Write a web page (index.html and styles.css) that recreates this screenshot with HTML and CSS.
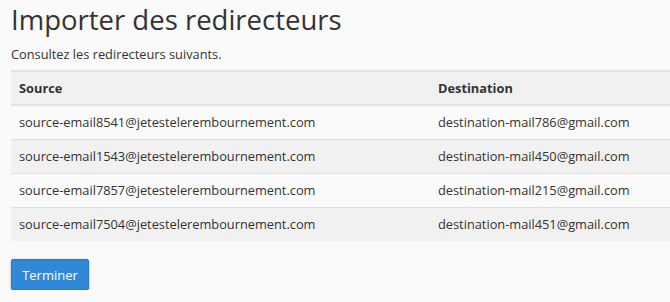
FILE: index.html
```html
<!DOCTYPE html>
<html lang="fr">
<head>
<meta charset="utf-8">
<title>Importer des redirecteurs</title>
<link rel="stylesheet" href="styles.css">
</head>
<body>
<main class="page">
  <h1 class="title">Importer des redirecteurs</h1>
  <p class="intro">Consultez les redirecteurs suivants.</p>
  <table class="list">
    <thead>
      <tr><th class="col-src">Source</th><th>Destination</th></tr>
    </thead>
    <tbody>
      <tr><td>source-email8541@jetestelerembournement.com</td><td>destination-mail786@gmail.com</td></tr>
      <tr><td>source-email1543@jetestelerembournement.com</td><td>destination-mail450@gmail.com</td></tr>
      <tr><td>source-email7857@jetestelerembournement.com</td><td>destination-mail215@gmail.com</td></tr>
      <tr><td>source-email7504@jetestelerembournement.com</td><td>destination-mail451@gmail.com</td></tr>
    </tbody>
  </table>
  <div class="actions">
    <button class="btn" type="button">Terminer</button>
  </div>
</main>
</body>
</html>
```

FILE: styles.css
```css
html, body {
  margin: 0;
  padding: 0;
  background: #fafafa;
}
body {
  font-family: "Open Sans", "Liberation Sans", sans-serif;
  color: #333;
}
.page {
  padding: 0 0 0 11px;
}
.title {
  margin: 0;
  padding-top: 2px;
  font-size: 27.5px;
  font-weight: 400;
  line-height: 36px;
  color: #333;
}
.intro {
  margin: 7px 0 0 0;
  font-size: 12.8px;
  line-height: 18px;
}
.list {
  margin-top: 7px;
  width: 100%;
  border-collapse: collapse;
  font-size: 12.8px;
}
.list th, .list td {
  text-align: left;
  padding: 0 8px;
  height: 34px;
  box-sizing: border-box;
  vertical-align: middle;
}
.list th {
  font-weight: 700;
  background: #f1f1f1;
  border-top: 2px solid #e3e3e3;
  border-bottom: 2px solid #e3e3e3;
}
.col-src {
  width: 419px;
}
.list td {
  border-top: 1px solid #e0e0e0;
}
.list tbody tr:nth-child(odd) td {
  background: #fafafa;
}
.list tbody tr:nth-child(even) td {
  background: #f1f1f1;
}
.actions {
  margin-top: 18px;
}
.btn {
  font-family: "Open Sans", "Liberation Sans", sans-serif;
  font-size: 13px;
  color: #fff;
  background: #3088d7;
  border: 1px solid #2a79c2;
  border-radius: 2px;
  width: 78px;
  height: 31px;
  padding: 0;
  box-shadow: 0 1px 3px rgba(0,0,0,0.3);
}
```
